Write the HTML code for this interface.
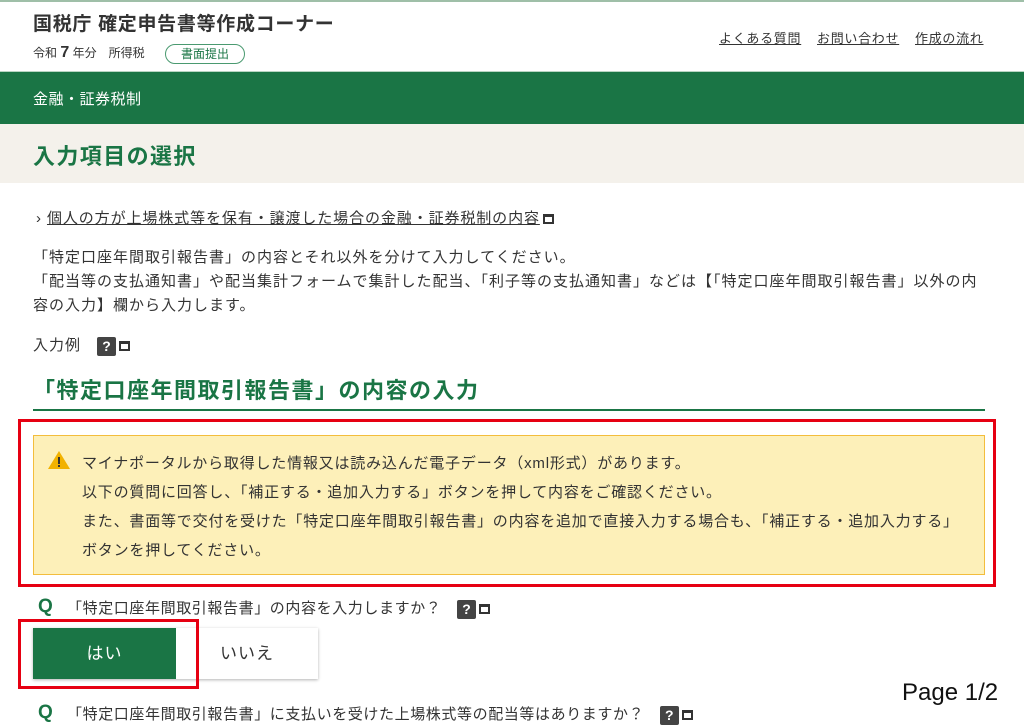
<!DOCTYPE html>
<html><head><meta charset="utf-8"><style>
*{margin:0;padding:0;box-sizing:border-box}
body{width:1024px;height:725px;overflow:hidden;background:#fff;font-family:"Liberation Sans","Noto Sans CJK JP",sans-serif;color:#333;position:relative}
.a{position:absolute;white-space:nowrap}
.t{font-size:15px;letter-spacing:1px;color:#333}
.q{display:inline-block;width:19px;height:19px;background:#444;color:#fff;font-size:14px;font-weight:bold;text-align:center;line-height:19px;border-radius:2px;vertical-align:middle;letter-spacing:0}
.w{display:inline-block;width:11px;height:10px;border:2px solid #333;border-top-width:3px;vertical-align:middle;margin-left:3px}
</style></head><body>
<div class="a" style="left:0;top:0;width:1024px;height:2px;background:#9fbfa8"></div>
<div class="a" style="left:33px;top:9px;font-size:19px;letter-spacing:0.7px;font-weight:bold;color:#333">国税庁 確定申告書等作成コーナー</div>
<div class="a" style="left:33px;top:44px;font-size:12px;color:#333">令和 <b style="font-size:16px">7</b> 年分　所得税</div>
<div class="a" style="left:165px;top:44px;width:80px;height:20px;border:1px solid #4a9a70;border-radius:10px;font-size:12px;color:#1a7545;text-align:center;line-height:18px">書面提出</div>
<div class="a" style="left:719px;top:28px;font-size:13px;letter-spacing:0.7px;color:#333;text-decoration:underline">よくある質問</div>
<div class="a" style="left:817px;top:28px;font-size:13px;letter-spacing:0.7px;color:#333;text-decoration:underline">お問い合わせ</div>
<div class="a" style="left:915px;top:28px;font-size:13px;letter-spacing:0.7px;color:#333;text-decoration:underline">作成の流れ</div>
<div class="a" style="left:0;top:71px;width:1024px;height:53px;background:#1a7545;border-top:1px solid #b8d5c2"></div>
<div class="a" style="left:33px;top:88px;font-size:15px;letter-spacing:0.5px;color:#fff">金融・証券税制</div>
<div class="a" style="left:0;top:124px;width:1024px;height:59px;background:#f4f1eb"></div>
<div class="a" style="left:33px;top:139px;font-size:22px;letter-spacing:1.4px;font-weight:bold;color:#1a7545">入力項目の選択</div>
<div class="a t" style="left:36px;top:207px;letter-spacing:0.9px">› <span style="text-decoration:underline">個人の方が上場株式等を保有・譲渡した場合の金融・証券税制の内容</span><span class="w"></span></div>
<div class="a t" style="left:33px;top:246px;line-height:24px">「特定口座年間取引報告書」の内容とそれ以外を分けて入力してください。<br>「配当等の支払通知書」や配当集計フォームで集計した配当、「利子等の支払通知書」などは【「特定口座年間取引報告書」以外の内<br>容の入力】欄から入力します。</div>
<div class="a t" style="left:33px;top:334px">入力例　<span class="q">?</span><span class="w"></span></div>
<div class="a" style="left:33px;top:373px;font-size:22px;letter-spacing:1.5px;font-weight:bold;color:#1a7545">「特定口座年間取引報告書」の内容の入力</div>
<div class="a" style="left:33px;top:409px;width:952px;height:2px;background:#1a7545"></div>
<div class="a" style="left:18px;top:419px;width:978px;height:168px;border:3px solid #e60012"></div>
<div class="a" style="left:33px;top:435px;width:952px;height:140px;background:#fdf0b9;border:1px solid #f3bd3c"></div>
<svg class="a" style="left:47px;top:450px" width="24" height="20" viewBox="0 0 24 20"><path d="M12 1 L23 19 L1 19 Z" fill="#f2b200"/><rect x="11" y="7" width="2" height="7" fill="#333"/><rect x="11" y="15" width="2" height="2" fill="#333"/></svg>
<div class="a t" style="left:82px;top:449px;line-height:29px;letter-spacing:0.8px">マイナポータルから取得した情報又は読み込んだ電子データ（xml形式）があります。<br>以下の質問に回答し、「補正する・追加入力する」ボタンを押して内容をご確認ください。<br>また、書面等で交付を受けた「特定口座年間取引報告書」の内容を追加で直接入力する場合も、「補正する・追加入力する」<br>ボタンを押してください。</div>
<div class="a" style="left:38px;top:596px;font-size:19px;font-weight:bold;color:#1a7545">Q</div>
<div class="a t" style="left:67px;top:597px;letter-spacing:0.6px">「特定口座年間取引報告書」の内容を入力しますか？　<span class="q">?</span><span class="w"></span></div>
<div class="a" style="left:33px;top:628px;width:285px;height:51px;background:#fff;box-shadow:0 1px 3px rgba(0,0,0,.3)"></div>
<div class="a" style="left:33px;top:628px;width:143px;height:51px;background:#1a7545;color:#fff;font-size:17px;letter-spacing:1px;text-align:center;line-height:51px">はい</div>
<div class="a" style="left:176px;top:628px;width:142px;height:51px;color:#333;font-size:17px;letter-spacing:1px;text-align:center;line-height:51px">いいえ</div>
<div class="a" style="left:18px;top:619px;width:181px;height:70px;border:3px solid #e60012"></div>
<div class="a" style="left:38px;top:702px;font-size:19px;font-weight:bold;color:#1a7545">Q</div>
<div class="a t" style="left:67px;top:703px;letter-spacing:0.6px">「特定口座年間取引報告書」に支払いを受けた上場株式等の配当等はありますか？　<span class="q">?</span><span class="w"></span></div>
<div class="a" style="left:902px;top:679px;font-size:24px;color:#111">Page 1/2</div>
</body></html>
